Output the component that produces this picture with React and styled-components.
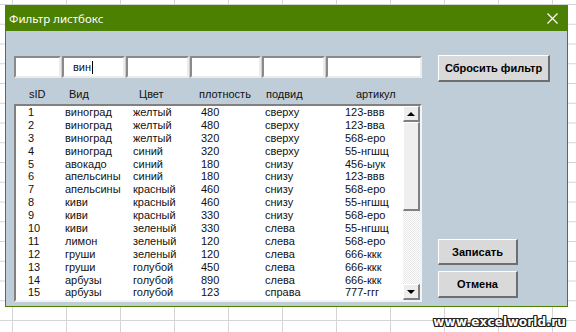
import React from 'react';
import styled, { createGlobalStyle } from 'styled-components';

const colors = {
  green: '#4b8002',
  body: '#bfcdd9',
  face: '#d9d9d9',
  dark: '#808080',
};

const font = '"Liberation Sans", Arial, sans-serif';

const GlobalStyle = createGlobalStyle`
  html, body {
    margin: 0;
    padding: 0;
  }
  body {
    width: 576px;
    height: 332px;
    overflow: hidden;
    background-color: #fff;
    background-image:
      linear-gradient(to right, #d4d4d4 1px, transparent 1px),
      linear-gradient(to bottom, #d4d4d4 1px, transparent 1px);
    background-size: 54px 19.75px;
    background-position: 12px 4px;
    font-family: ${font};
  }
`;

const Page = styled.div`
  position: relative;
  width: 576px;
  height: 332px;
  box-sizing: border-box;
  padding: 5px 0 0 5px;
`;

const Window = styled.div`
  width: 563px;
  height: 302px;
  box-sizing: border-box;
  border: 1px solid ${colors.green};
  background: ${colors.body};
  display: flex;
  flex-direction: column;
`;

const TitleBar = styled.div`
  height: 25px;
  flex: none;
  background: ${colors.green};
  display: flex;
  align-items: center;
  justify-content: space-between;
  padding: 0 9px 0 3px;
`;

const Title = styled.span`
  color: #fff;
  font-family: "Noto Sans", "Open Sans", sans-serif;
  font-size: 11.5px;
`;

const Body = styled.div`
  flex: 1;
  display: flex;
  padding: 24px 0 0 8px;
`;

const LeftColumn = styled.div`
  width: 408px;
  margin-top: 1px;
  display: flex;
  flex-direction: column;
`;

const FilterRow = styled.div`
  display: flex;
  gap: 1px;
  height: 22px;
`;

const FilterBox = styled.div`
  width: ${p => p.$w}px;
  box-sizing: border-box;
  background: #fff;
  border-top: 2px solid #8a8a8a;
  border-left: 2px solid #8a8a8a;
  border-bottom: 2px solid #ececec;
  border-right: 2px solid #ececec;
  font-size: 11px;
  color: #111;
  display: flex;
  align-items: center;
  padding-left: 9px;
`;

const Caret = styled.span`
  display: inline-block;
  width: 1px;
  height: 13px;
  background: #000;
  margin-left: 1px;
`;

const HeaderRow = styled.div`
  height: 26px;
  box-sizing: border-box;
  padding: 10px 0 0 15px;
  display: grid;
  grid-template-columns: 40px 70px 60px 67px 90px auto;
  font-size: 11px;
  line-height: 13px;
  color: #111;
`;

const ListBox = styled.div`
  height: 198px;
  box-sizing: border-box;
  border-top: 2px solid ${colors.dark};
  border-left: 2px solid ${colors.dark};
  border-bottom: 2px solid #f4f4f4;
  border-right: 2px solid #f4f4f4;
  background: #fff;
  display: flex;
`;

const Rows = styled.div`
  flex: 1;
`;

const Row = styled.div`
  display: grid;
  grid-template-columns: 37px 68px 68px 64px 80px auto;
  padding-left: 12px;
  height: 12.9px;
  line-height: 12.9px;
  font-size: 11px;
  color: #111;
  white-space: nowrap;
`;

const ScrollBar = styled.div`
  width: 17px;
  margin-left: 1px;
  display: flex;
  flex-direction: column;
  background-color: #fff;
  background-image: repeating-conic-gradient(#e6e6e6 0 25%, #fff 0 50%);
  background-size: 2px 2px;
`;

const ScrollButton = styled.div`
  height: 16px;
  flex: none;
  box-sizing: border-box;
  background: #ededed;
  border-top: 1px solid #fff;
  border-left: 1px solid #fff;
  border-bottom: 2px solid ${colors.dark};
  border-right: 2px solid ${colors.dark};
  display: flex;
  align-items: center;
  justify-content: center;
  margin-top: ${p => (p.$down ? 'auto' : '0')};
`;

const Arrow = styled.span`
  width: 0;
  height: 0;
  border-left: 4px solid transparent;
  border-right: 4px solid transparent;
  ${p =>
    p.$down
      ? 'border-top: 4px solid #000;'
      : 'border-bottom: 4px solid #000;'}
`;

const Thumb = styled.div`
  height: 89px;
  flex: none;
  box-sizing: border-box;
  background: #efefef;
  border-top: 1px solid #fff;
  border-left: 1px solid #fff;
  border-bottom: 2px solid ${colors.dark};
  border-right: 2px solid ${colors.dark};
`;

const RightColumn = styled.div`
  margin-left: 16px;
  width: 112px;
  display: flex;
  flex-direction: column;
  align-items: flex-start;
`;

const Button = styled.button`
  width: ${p => p.$w}px;
  height: ${p => p.$h}px;
  margin-top: ${p => p.$mt || 0}px;
  padding: 0;
  box-sizing: border-box;
  background: ${colors.face};
  border-top: 1px solid #fff;
  border-left: 1px solid #fff;
  border-bottom: 2px solid #6e6e6e;
  border-right: 2px solid #6e6e6e;
  font-family: ${font};
  font-weight: bold;
  font-size: 11px;
  color: #000;
`;

const Watermark = styled.div`
  position: absolute;
  right: 10px;
  bottom: 3px;
  font-family: "DejaVu Sans", Verdana, sans-serif;
  font-weight: bold;
  font-size: 12px;
  color: #fff;
  letter-spacing: 0.2px;
  text-shadow:
    1px 0 0 #222, -1px 0 0 #222, 0 1px 0 #222, 0 -1px 0 #222,
    1px 1px 0 #222, -1px -1px 0 #222, 1px -1px 0 #222, -1px 1px 0 #222;
`;

const filterWidths = [47, 63, 63, 71, 63, 96];
const headers = ['sID', 'Вид', 'Цвет', 'плотность', 'подвид', 'артикул'];

const data = [
  [1, 'виноград', 'желтый', 480, 'сверху', '123-ввв'],
  [2, 'виноград', 'желтый', 480, 'сверху', '123-вва'],
  [3, 'виноград', 'желтый', 320, 'сверху', '568-еро'],
  [4, 'виноград', 'синий', 320, 'сверху', '55-нгшщ'],
  [5, 'авокадо', 'синий', 180, 'снизу', '456-ыук'],
  [6, 'апельсины', 'синий', 180, 'снизу', '123-ввв'],
  [7, 'апельсины', 'красный', 460, 'снизу', '568-еро'],
  [8, 'киви', 'красный', 460, 'снизу', '55-нгшщ'],
  [9, 'киви', 'красный', 330, 'снизу', '568-еро'],
  [10, 'киви', 'зеленый', 330, 'слева', '55-нгшщ'],
  [11, 'лимон', 'зеленый', 120, 'слева', '568-еро'],
  [12, 'груши', 'зеленый', 120, 'слева', '666-ккк'],
  [13, 'груши', 'голубой', 450, 'слева', '666-ккк'],
  [14, 'арбузы', 'голубой', 890, 'слева', '666-ккк'],
  [15, 'арбузы', 'голубой', 123, 'справа', '777-ггг'],
];

const CloseIcon = () => (
  <svg width="11" height="11" viewBox="0 0 11 11">
    <path d="M0.5 0.5 L10.5 10.5 M10.5 0.5 L0.5 10.5" stroke="#fff" strokeWidth="1.2" />
  </svg>
);

export default function App() {
  return (
    <Page>
      <GlobalStyle />
      <Window>
        <TitleBar>
          <Title>Фильтр листбокс</Title>
          <CloseIcon />
        </TitleBar>
        <Body>
          <LeftColumn>
            <FilterRow>
              {filterWidths.map((w, i) => (
                <FilterBox key={i} $w={w}>
                  {i === 1 && (
                    <>
                      вин<Caret />
                    </>
                  )}
                </FilterBox>
              ))}
            </FilterRow>
            <HeaderRow>
              {headers.map(h => (
                <span key={h}>{h}</span>
              ))}
            </HeaderRow>
            <ListBox>
              <Rows>
                {data.map(row => (
                  <Row key={row[0]}>
                    {row.map((cell, i) => (
                      <span key={i}>{cell}</span>
                    ))}
                  </Row>
                ))}
              </Rows>
              <ScrollBar>
                <ScrollButton>
                  <Arrow />
                </ScrollButton>
                <Thumb />
                <ScrollButton $down>
                  <Arrow $down />
                </ScrollButton>
              </ScrollBar>
            </ListBox>
          </LeftColumn>
          <RightColumn>
            <Button $w={112} $h={27}>Сбросить фильтр</Button>
            <Button $w={80} $h={26} $mt={157}>Записать</Button>
            <Button $w={80} $h={27} $mt={6}>Отмена</Button>
          </RightColumn>
        </Body>
      </Window>
      <Watermark>www.excelworld.ru</Watermark>
    </Page>
  );
}
